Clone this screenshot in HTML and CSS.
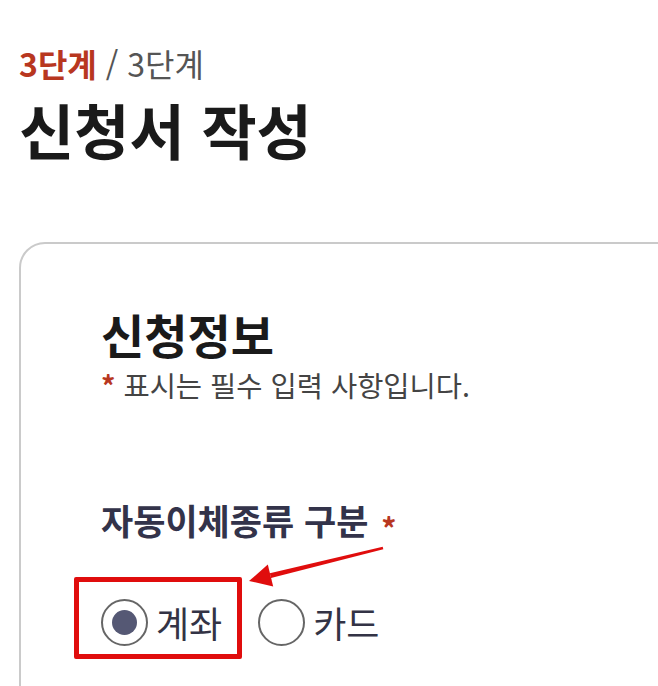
FILE: index.html
```html
<!DOCTYPE html>
<html lang="ko">
<head>
  <meta charset="UTF-8">
  <meta name="viewport" content="width=device-width, initial-scale=1.0">
  <title>신청서 작성</title>
  <link rel="stylesheet" href="styles.css">
</head>
<body>
  <div class="page">
    <p class="step"><strong>3단계</strong> / 3단계</p>
    <h1>신청서 작성</h1>

    <section class="card">
      <h2>신청정보</h2>
      <p class="note"><span class="req">*</span> 표시는 필수 입력 사항입니다.</p>

      <fieldset class="field">
        <legend>자동이체종류 구분 <span class="req">*</span></legend>
        <div class="options">
          <label class="option">
            <input type="radio" name="payType" value="account" checked>
            <span>계좌</span>
          </label>
          <label class="option">
            <input type="radio" name="payType" value="card">
            <span>카드</span>
          </label>

          <!-- 안내용 표시 -->
          <div class="mark-box"></div>
          <svg class="mark-arrow" width="150" height="50" viewBox="0 0 150 50">
            <polygon points="141.7,7.8 142.3,10.2 30,39.1 28.8,34.3" fill="#e00d0d"/>
            <polygon points="8,42 26.8,25.6 32.2,47.4" fill="#e00d0d"/>
          </svg>
        </div>
      </fieldset>
    </section>
  </div>
</body>
</html>
```

FILE: styles.css
```css
* {
    margin: 0;
    padding: 0;
    box-sizing: border-box;
    font-family: "Noto Sans CJK KR", "Noto Sans", sans-serif;
}

body {
    background: #fff;
    overflow: hidden;
}

.page {
    padding: 44px 0 0 19px;
}

.step {
    font-size: 32px;
    line-height: 38px;
    color: #555;
}

.step strong {
    color: #b8371f;
    font-weight: 700;
}

h1 {
    margin-top: 12px;
    font-size: 60px;
    line-height: 70px;
    font-weight: 700;
    color: #1a1a1a;
}

.card {
    margin-top: 78px;
    width: 700px;
    height: 600px;
    border: 2px solid #cacaca;
    border-radius: 26px;
    padding: 62px 0 0 80px;
}

.card h2 {
    font-size: 47px;
    line-height: 56px;
    font-weight: 700;
    color: #1a1a1a;
}

.note {
    margin-top: 5px;
    font-size: 28.5px;
    line-height: 36px;
    color: #444;
}

.req {
    color: #b8371f;
    font-weight: 700;
}

.field {
    border: none;
    margin-top: 94px;
}

.field legend {
    font-size: 35px;
    line-height: 45px;
    font-weight: 700;
    color: #33334a;
}

.field legend .req {
    margin-left: 3px;
    font-size: 30px;
    vertical-align: -5px;
}

.options {
    position: relative;
    display: flex;
    align-items: center;
    gap: 36px;
    margin-top: 49px;
}

.option {
    display: flex;
    align-items: center;
    gap: 8px;
    font-size: 36px;
    line-height: 47px;
    color: #333345;
    cursor: pointer;
}

.option input {
    appearance: none;
    width: 47px;
    height: 47px;
    border: 2px solid #666;
    border-radius: 50%;
    background: #fff;
    display: grid;
    place-items: center;
}

.option input:checked::after {
    content: "";
    width: 25px;
    height: 25px;
    border-radius: 50%;
    background: #555874;
}

.mark-box {
    position: absolute;
    left: -27px;
    top: -22px;
    width: 168px;
    height: 82px;
    border: 5px solid #e00d0d;
    border-radius: 2px;
    pointer-events: none;
}

.mark-arrow {
    position: absolute;
    left: 140px;
    top: -60px;
    pointer-events: none;
}
```
